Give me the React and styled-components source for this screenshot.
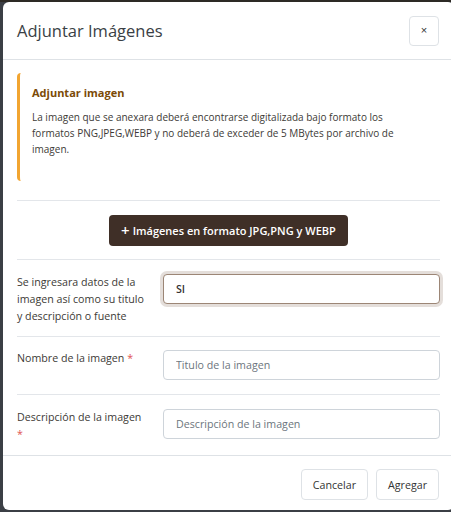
import styled, { createGlobalStyle } from "styled-components";

const GlobalStyle = createGlobalStyle`
  html, body {
    margin: 0;
    padding: 0;
    background: #3b3f45;
    overflow: hidden;
  }
  body {
    font-family: "Open Sans", "Liberation Sans", sans-serif;
  }
`

const Backdrop = styled.div`
  height: 512px;
  padding: 2px 0 0 3px;
  box-sizing: border-box;
  background: linear-gradient(#2d2a25 0, #2d2a25 2px, #3b3f45 2px);
`
const Modal = styled.div`
  width: 451px;
  height: 508px;
  background: #fff;
  border-radius: 6px;
  display: flex;
  flex-direction: column;
  box-sizing: border-box;
`
const Header = styled.div`
  flex-shrink: 0;
  height: 57px;
  display: flex;
  align-items: center;
  justify-content: space-between;
  padding: 0 14px;
  border-bottom: 1px solid #dee2e6;
`
const Title = styled.h5`
  margin: 0;
  font-size: 16.5px;
  font-weight: 500;
  color: #3a3f45;
`
const CloseButton = styled.button`
  width: 30px;
  height: 30px;
  border: 1px solid #dee2e6;
  border-radius: 4px;
  background: #fff;
  color: #333;
  font-size: 11px;
  line-height: 1;
  padding: 0;
  margin-right: 1px;
`
const Body = styled.div`
  flex: 1;
  min-height: 0;
  padding: 13px 14px 0;
`
const Alert = styled.div`
  border-left: 3px solid #f2a531;
  border-radius: 4px;
  padding: 12px 12px 0 12px;
  height: 108px;
  box-sizing: border-box;
`
const AlertTitle = styled.div`
  font-size: 11px;
  line-height: 16px;
  font-weight: 700;
  color: #7b4a06;
  margin-bottom: 8px;
`
const AlertText = styled.p`
  margin: 0;
  font-size: 10px;
  line-height: 16px;
  color: #3d3a36;
`
const Divider = styled.hr`
  border: 0;
  border-top: 1px solid #e3e6ea;
  margin: ${p => p.$top || 0}px 0 0;
`
const ButtonRow = styled.div`
  display: flex;
  justify-content: center;
  padding: 14px 0 13px;
`
const UploadButton = styled.button`
  background: #3f2f27;
  color: #fff;
  border: 0;
  border-radius: 4px;
  height: 31px;
  padding: 0 12px;
  font-family: inherit;
  font-size: 11px;
  font-weight: 600;
  display: flex;
  align-items: center;
  gap: 3px;
  .plus {
    font-size: 15px;
    font-weight: 600;
    line-height: 1;
  }
`
const FieldRow = styled.div`
  display: grid;
  grid-template-columns: 146px 1fr;
  align-items: start;
  padding: ${p => p.$pad || "14px 0"};
  border-top: 1px solid #e3e6ea;
`
const Label = styled.label`
  font-size: 10.67px;
  line-height: 17px;
  color: #3d3a36;
  padding-right: 15px;
  .req {
    color: #e05252;
  }
`
const Input = styled.input`
  height: 30px;
  box-sizing: border-box;
  border: 1px solid ${p => (p.$focus ? "#9c8676" : "#ced4da")};
  box-shadow: ${p => (p.$focus ? "0 0 0 3px rgba(120, 90, 70, 0.2)" : "none")};
  border-radius: 4px;
  padding: 0 12px;
  font-family: inherit;
  font-size: 10.67px;
  font-weight: ${p => (p.$focus ? 600 : 400)};
  color: #333;
  outline: none;
  width: 100%;
  &::placeholder {
    color: #6c757d;
  }
`
const Footer = styled.div`
  flex-shrink: 0;
  border-top: 1px solid #dee2e6;
  display: flex;
  justify-content: flex-end;
  gap: 8px;
  padding: 13px 15px 10px;
`
const FooterButton = styled.button`
  height: 31px;
  border: 1px solid #dee2e6;
  border-radius: 4px;
  background: #fff;
  color: #333;
  font-family: inherit;
  font-size: 10.67px;
  padding: 0 11px;
`

function App() {
  return (
    <>
      <GlobalStyle />
      <Backdrop>
        <Modal>
          <Header>
            <Title>Adjuntar Imágenes</Title>
            <CloseButton>×</CloseButton>
          </Header>
          <Body>
            <Alert>
              <AlertTitle>Adjuntar imagen</AlertTitle>
              <AlertText>
                La imagen que se anexara deberá encontrarse digitalizada bajo formato los
                formatos PNG,JPEG,WEBP y no deberá de exceder de 5 MBytes por archivo de
                imagen.
              </AlertText>
            </Alert>
            <Divider $top={19} />
            <ButtonRow>
              <UploadButton>
                <span className="plus">+</span> Imágenes en formato JPG,PNG y WEBP
              </UploadButton>
            </ButtonRow>
            <FieldRow $pad="14px 0 11px">
              <Label>Se ingresara datos de la imagen así como su titulo y descripción o fuente</Label>
              <Input $focus defaultValue="SI" />
            </FieldRow>
            <FieldRow $pad="13px 0 14px">
              <Label>
                Nombre de la imagen <span className="req">*</span>
              </Label>
              <Input placeholder="Titulo de la imagen" />
            </FieldRow>
            <FieldRow $pad="14px 0 12px">
              <Label>
                Descripción de la imagen <span className="req">*</span>
              </Label>
              <Input placeholder="Descripción de la imagen" />
            </FieldRow>
          </Body>
          <Footer>
            <FooterButton>Cancelar</FooterButton>
            <FooterButton>Agregar</FooterButton>
          </Footer>
        </Modal>
      </Backdrop>
    </>
  );
}

export default App;
